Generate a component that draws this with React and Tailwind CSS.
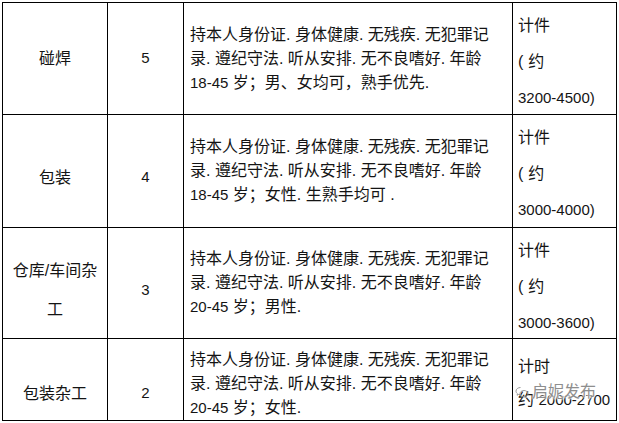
import React from "react";

const L1 = "持本人身份证. 身体健康. 无残疾. 无犯罪记";
const L2 = "录. 遵纪守法. 听从安排. 无不良嗜好. 年龄";

function N({ children }) {
  return <span className="text-[15px]">{children}</span>;
}

function Desc({ lines, extra }) {
  return (
    <div className={"border-l border-t border-black flex flex-col justify-center pl-[6px] leading-[24px] whitespace-nowrap " + (extra || "")}>
      {lines.map((l, i) => (
        <div key={i}>{l}</div>
      ))}
    </div>
  );
}

function Pay({ lines, extra, children }) {
  return (
    <div className={"relative border-l border-t border-black flex flex-col pl-[5px] whitespace-nowrap " + (extra || "")}>
      {lines.map((l, i) => (
        <div key={i}>{l}</div>
      ))}
      {children}
    </div>
  );
}

function Center({ children, extra }) {
  return (
    <div className={"border-l border-t border-black flex flex-col items-center justify-center text-center " + (extra || "")}>
      {children}
    </div>
  );
}

const yue = <span key="a">(<span className="ml-[5px]">约</span></span>;

export default function App() {
  return (
    <div className="w-[619px] h-[423px] bg-white overflow-hidden pl-[2px] pt-[2px] font-['Liberation_Sans','Noto_Sans_CJK_SC',sans-serif] text-[16px] text-[#141414]">
      <div className="grid grid-cols-[105px_76px_329px_104px] grid-rows-[112px_113px_111px_82px] w-[615px] h-[419px] border-r border-b border-black">
        {/* Row 1 */}
        <Center>碰焊</Center>
        <Center><N>5</N></Center>
        <Desc lines={[L1, L2, <span key="c"><N>18-45</N> 岁；男、女均可，熟手优先.</span>]} />
        <Pay lines={["计件", yue, <N key="n">3200-4500)</N>]} extra="pt-[5px] leading-[36px]" />

        {/* Row 2 */}
        <Center extra="pt-[13px]">包装</Center>
        <Center extra="pt-[13px]"><N>4</N></Center>
        <Desc lines={[L1, L2, <span key="c"><N>18-45</N> 岁；女性. 生熟手均可 .</span>]} />
        <Pay lines={["计件", yue, <N key="n">3000-4000)</N>]} extra="pt-[5px] leading-[36px]" />

        {/* Row 3 */}
        <Center extra="pt-[14px] leading-[39px]">
          <div>仓库/车间杂</div>
          <div>工</div>
        </Center>
        <Center extra="pt-[14px]"><N>3</N></Center>
        <Desc lines={[L1, L2, <span key="c"><N>20-45</N> 岁；男性.</span>]} />
        <Pay lines={["计件", yue, <N key="n">3000-3600)</N>]} extra="pt-[5px] leading-[36px]" />

        {/* Row 4 */}
        <Center extra="pt-[28px]">包装杂工</Center>
        <Center extra="pt-[28px]"><N>2</N></Center>
        <Desc lines={[L1, L2, <span key="c"><N>20-45</N> 岁；女性.</span>]} extra="pt-[8px]" />
        <Pay lines={["计时", <span key="b">约 <N>2000-2700</N></span>]} extra="pt-[11px] leading-[33px]">
          <div className="absolute left-[2px] top-[43px] flex items-center gap-[3px] text-[#8e8e8e] text-[16px] leading-[20px] [text-shadow:0_0_2px_#fff,0_0_2px_#fff,0_0_3px_#fff]">
            <svg width="14" height="13" viewBox="0 0 14 13" fill="none" stroke="#9a9a9a" strokeWidth="1">
              <path d="M5.5 1.5c-2.5 0-4.5 1.6-4.5 3.6 0 1.1.6 2 1.5 2.7l-.4 1.4 1.6-.8c.6.2 1.2.3 1.8.3" />
              <path d="M9 4.5c-2.3 0-4 1.4-4 3.2s1.7 3.2 4 3.2c.5 0 .9-.1 1.3-.2l1.4.8-.3-1.2c.9-.6 1.6-1.5 1.6-2.6 0-1.8-1.8-3.2-4-3.2z" />
            </svg>
            <span>启妮发布</span>
          </div>
        </Pay>
      </div>
    </div>
  );
}
